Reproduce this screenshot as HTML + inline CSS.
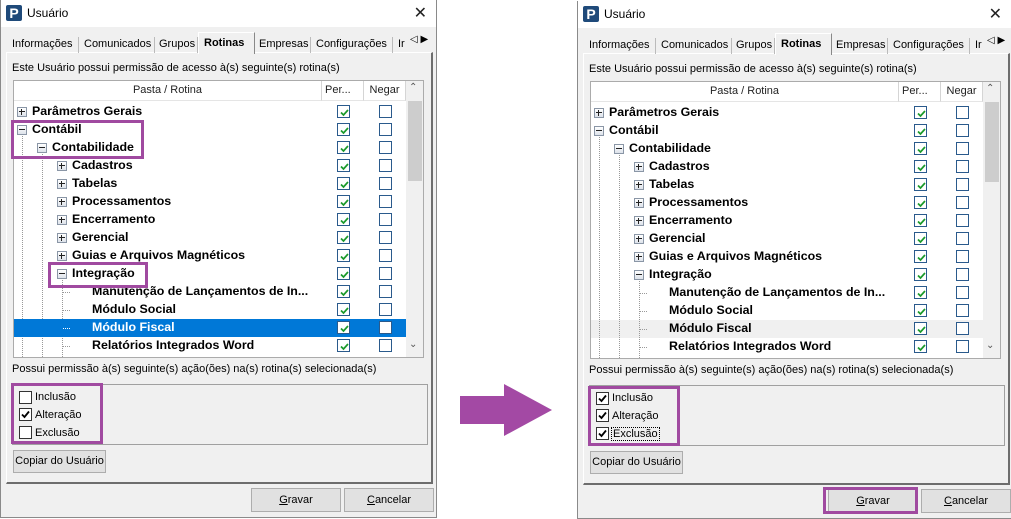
<!DOCTYPE html>
<html><head><meta charset="utf-8">
<style>
*{box-sizing:border-box;margin:0;padding:0}
body{width:1011px;height:519px;background:#fff;position:relative;overflow:hidden;font-family:"Liberation Sans","DejaVu Sans",sans-serif;font-size:11px;color:#000}
.win{position:absolute;top:0;width:437px;height:518px;background:#f0f0f0;border:1px solid #8a8a8a;border-top:none;overflow:hidden}
.title{position:absolute;left:0;top:0;right:0;height:27px;background:#fff}
.ico{position:absolute;left:5px;top:5px;width:16px;height:16px;background:#1f4a7a;border-radius:2px;color:#fff;font-weight:bold;font-size:14px;line-height:16px;text-align:center}
.ttl{position:absolute;left:26px;top:6px;font-size:12px}
.x{position:absolute;right:9px;top:3px;font-size:16px;color:#222;font-weight:normal}
.a{position:absolute;white-space:nowrap}
.tab{position:absolute;top:37px;height:16px;padding:1px 0 0 0;border-right:1px solid #bbb;white-space:nowrap;font-size:11px}
.panel{position:absolute;left:5px;top:52px;width:427px;height:432px;border:1px solid #fff;border-right:2px solid #6d6d6d;border-bottom:2px solid #6d6d6d}
.grid{position:absolute;left:12px;top:80px;width:411px;height:278px;background:#fff;border:1px solid #ababab;overflow:hidden}
.hdr{position:absolute;top:0;height:20px;border-right:1px solid #d5d5d5;border-bottom:1px solid #e5e5e5;text-align:center;line-height:19px;font-size:11px;color:#222;white-space:nowrap}
.row{position:absolute;left:0;width:392px;height:18px}
.row b{position:absolute;top:1px;font-size:12.4px;white-space:nowrap}
.exp{position:absolute;top:4px;width:10px;height:10px;border:1px solid #8a96a6;background:linear-gradient(#fff,#dde2ea)}
.exp:before{content:"";position:absolute;left:1px;top:3px;width:6px;height:1px;background:#222}
.exp.p:after{content:"";position:absolute;left:3px;top:1px;width:1px;height:6px;background:#222}
.cb{position:absolute;top:2px;width:13px;height:13px;border:1px solid #2a5a8c;background:#fff}
.cb svg{position:absolute;left:1px;top:1px}
.vl{position:absolute;width:0;border-left:1px dotted #999}
.hl{position:absolute;height:0;width:7px;border-top:1px dotted #999}
.btn{position:absolute;height:24px;background:#e1e1e1;border:1px solid #adadad;text-align:center;line-height:22px;white-space:nowrap;font-size:11px}
.ck{position:absolute;width:13px;height:13px;border:1px solid #333;background:#fff}
.pur{position:absolute;border:3px solid #a04aa0}
</style></head><body>

<!-- LEFT WINDOW -->
<div class="win" style="left:0">
 <div class="title"><div class="ico">P</div><div class="ttl">Usuário</div><div class="x">✕</div></div>
 <div class="panel"></div>
 <div class="tab" style="left:9px;width:69px;padding-left:2px">Informações</div>
 <div class="tab" style="left:80px;width:74px;padding-left:3px">Comunicados</div>
 <div class="tab" style="left:155px;width:42px;padding-left:3px">Grupos</div>
 <div class="a" style="left:197px;top:32px;width:57px;height:22px;background:#f0f0f0;border:1px solid #fff;border-bottom:none;border-right:1px solid #888;padding:4px 0 0 5px;font-weight:bold;font-size:11px">Rotinas</div>
 <div class="tab" style="left:256px;width:54px;padding-left:2px">Empresas</div>
 <div class="tab" style="left:311px;width:81px;padding-left:4px">Configurações</div>
 <div class="a" style="left:397px;top:38px">Ir</div>
 <div class="a" style="left:409px;top:34px;font-size:10px">◁ ▶</div>
 <div class="a" style="left:11px;top:62px">Este Usuário possui permissão de acesso à(s) seguinte(s) rotina(s)</div>
 <div class="grid">
  <div class="hdr" style="left:0;width:308px">Pasta / Rotina</div>
  <div class="hdr" style="left:308px;width:42px;text-align:left;padding-left:3px">Per...</div>
  <div class="hdr" style="left:350px;width:42px">Negar</div>
  <div class="a" style="left:392px;top:0;width:18px;height:277px;background:#f0f0f0"></div>
  <div class="a" style="left:394px;top:20px;width:14px;height:80px;background:#cdcdcd"></div>
  <div class="a" style="left:395px;top:1px;font-size:10px;color:#555">⌃</div>
  <div class="a" style="left:395px;top:258px;font-size:10px;color:#555">⌄</div>
  <div class="vl" style="left:8px;top:50px;height:228px"></div>
  <div class="vl" style="left:28px;top:68px;height:210px"></div>
  <div class="vl" style="left:48px;top:194px;height:84px"></div>
  <div class="row" style="top:238px;background:#0078d7"></div>
  <div class="row" style="top:22px"><div class="exp p" style="left:3px"></div><b style="left:18px">Parâmetros Gerais</b><div class="cb" style="left:323px"><svg width="11" height="11"><path d="M2 5.5l2.5 2.5 4.5-5" stroke="#1a9a2a" stroke-width="1.7" fill="none"/></svg></div><div class="cb" style="left:365px"></div></div>
  <div class="row" style="top:40px"><div class="exp" style="left:3px"></div><b style="left:18px">Contábil</b><div class="cb" style="left:323px"><svg width="11" height="11"><path d="M2 5.5l2.5 2.5 4.5-5" stroke="#1a9a2a" stroke-width="1.7" fill="none"/></svg></div><div class="cb" style="left:365px"></div></div>
  <div class="row" style="top:58px"><div class="exp" style="left:23px"></div><b style="left:38px">Contabilidade</b><div class="cb" style="left:323px"><svg width="11" height="11"><path d="M2 5.5l2.5 2.5 4.5-5" stroke="#1a9a2a" stroke-width="1.7" fill="none"/></svg></div><div class="cb" style="left:365px"></div></div>
  <div class="row" style="top:76px"><div class="exp p" style="left:43px"></div><b style="left:58px">Cadastros</b><div class="cb" style="left:323px"><svg width="11" height="11"><path d="M2 5.5l2.5 2.5 4.5-5" stroke="#1a9a2a" stroke-width="1.7" fill="none"/></svg></div><div class="cb" style="left:365px"></div></div>
  <div class="row" style="top:94px"><div class="exp p" style="left:43px"></div><b style="left:58px">Tabelas</b><div class="cb" style="left:323px"><svg width="11" height="11"><path d="M2 5.5l2.5 2.5 4.5-5" stroke="#1a9a2a" stroke-width="1.7" fill="none"/></svg></div><div class="cb" style="left:365px"></div></div>
  <div class="row" style="top:112px"><div class="exp p" style="left:43px"></div><b style="left:58px">Processamentos</b><div class="cb" style="left:323px"><svg width="11" height="11"><path d="M2 5.5l2.5 2.5 4.5-5" stroke="#1a9a2a" stroke-width="1.7" fill="none"/></svg></div><div class="cb" style="left:365px"></div></div>
  <div class="row" style="top:130px"><div class="exp p" style="left:43px"></div><b style="left:58px">Encerramento</b><div class="cb" style="left:323px"><svg width="11" height="11"><path d="M2 5.5l2.5 2.5 4.5-5" stroke="#1a9a2a" stroke-width="1.7" fill="none"/></svg></div><div class="cb" style="left:365px"></div></div>
  <div class="row" style="top:148px"><div class="exp p" style="left:43px"></div><b style="left:58px">Gerencial</b><div class="cb" style="left:323px"><svg width="11" height="11"><path d="M2 5.5l2.5 2.5 4.5-5" stroke="#1a9a2a" stroke-width="1.7" fill="none"/></svg></div><div class="cb" style="left:365px"></div></div>
  <div class="row" style="top:166px"><div class="exp p" style="left:43px"></div><b style="left:58px">Guias e Arquivos Magnéticos</b><div class="cb" style="left:323px"><svg width="11" height="11"><path d="M2 5.5l2.5 2.5 4.5-5" stroke="#1a9a2a" stroke-width="1.7" fill="none"/></svg></div><div class="cb" style="left:365px"></div></div>
  <div class="row" style="top:184px"><div class="exp" style="left:43px"></div><b style="left:58px">Integração</b><div class="cb" style="left:323px"><svg width="11" height="11"><path d="M2 5.5l2.5 2.5 4.5-5" stroke="#1a9a2a" stroke-width="1.7" fill="none"/></svg></div><div class="cb" style="left:365px"></div></div>
  <div class="row" style="top:202px"><div class="hl" style="left:49px;top:9px"></div><b style="left:78px">Manutenção de Lançamentos de In...</b><div class="cb" style="left:323px"><svg width="11" height="11"><path d="M2 5.5l2.5 2.5 4.5-5" stroke="#1a9a2a" stroke-width="1.7" fill="none"/></svg></div><div class="cb" style="left:365px"></div></div>
  <div class="row" style="top:220px"><div class="hl" style="left:49px;top:9px"></div><b style="left:78px">Módulo Social</b><div class="cb" style="left:323px"><svg width="11" height="11"><path d="M2 5.5l2.5 2.5 4.5-5" stroke="#1a9a2a" stroke-width="1.7" fill="none"/></svg></div><div class="cb" style="left:365px"></div></div>
  <div class="row" style="top:238px"><div class="hl" style="left:49px;top:9px;border-color:#fff"></div><b style="left:78px;color:#fff">Módulo Fiscal</b><div class="cb" style="left:323px"><svg width="11" height="11"><path d="M2 5.5l2.5 2.5 4.5-5" stroke="#1a9a2a" stroke-width="1.7" fill="none"/></svg></div><div class="cb" style="left:365px"></div></div>
  <div class="row" style="top:256px"><div class="hl" style="left:49px;top:9px"></div><b style="left:78px">Relatórios Integrados Word</b><div class="cb" style="left:323px"><svg width="11" height="11"><path d="M2 5.5l2.5 2.5 4.5-5" stroke="#1a9a2a" stroke-width="1.7" fill="none"/></svg></div><div class="cb" style="left:365px"></div></div>
 </div>
 <div class="a" style="left:11px;top:363px">Possui permissão à(s) seguinte(s) ação(ões) na(s) rotina(s) selecionada(s)</div>
 <div class="a" style="left:11px;top:384px;width:416px;height:61px;border:1px solid #a0a0a0"></div>
 <div class="ck" style="left:18px;top:391px"></div><div class="a" style="left:34px;top:391px">Inclusão</div>
 <div class="ck" style="left:18px;top:408px"><svg width="11" height="11"><path d="M2 5.5l2.5 2.5 4.5-5.5" stroke="#000" stroke-width="1.8" fill="none"/></svg></div><div class="a" style="left:34px;top:409px">Alteração</div>
 <div class="ck" style="left:18px;top:426px"></div><div class="a" style="left:34px;top:427px">Exclusão</div>
 <div class="btn" style="left:12px;top:450px;width:93px;height:23px;line-height:21px">Copiar do Usuário</div>
 <div class="btn" style="left:250px;top:488px;width:90px"><u>G</u>ravar</div>
 <div class="btn" style="left:343px;top:488px;width:90px"><u>C</u>ancelar</div>
</div>
<div class="pur" style="left:11px;top:120px;width:133px;height:39px"></div>
<div class="pur" style="left:48px;top:262px;width:100px;height:26px"></div>
<div class="pur" style="left:11px;top:383px;width:92px;height:61px"></div>

<!-- ARROW -->
<svg style="position:absolute;left:455px;top:380px" width="105" height="60"><path d="M5 16H49V4L97 30L49 56V44H5Z" fill="#a349a4"/></svg>

<!-- RIGHT WINDOW -->
<div class="win" style="left:577px;top:1px;width:434px;border-right:none">
 <div class="title"><div class="ico">P</div><div class="ttl">Usuário</div><div class="x">✕</div></div>
 <div class="panel"></div>
 <div class="tab" style="left:9px;width:69px;padding-left:2px">Informações</div>
 <div class="tab" style="left:80px;width:74px;padding-left:3px">Comunicados</div>
 <div class="tab" style="left:155px;width:42px;padding-left:3px">Grupos</div>
 <div class="a" style="left:197px;top:32px;width:57px;height:22px;background:#f0f0f0;border:1px solid #fff;border-bottom:none;border-right:1px solid #888;padding:4px 0 0 5px;font-weight:bold;font-size:11px">Rotinas</div>
 <div class="tab" style="left:256px;width:54px;padding-left:2px">Empresas</div>
 <div class="tab" style="left:311px;width:81px;padding-left:4px">Configurações</div>
 <div class="a" style="left:397px;top:38px">Ir</div>
 <div class="a" style="left:409px;top:34px;font-size:10px">◁ ▶</div>
 <div class="a" style="left:11px;top:62px">Este Usuário possui permissão de acesso à(s) seguinte(s) rotina(s)</div>
 <div class="grid">
  <div class="hdr" style="left:0;width:308px">Pasta / Rotina</div>
  <div class="hdr" style="left:308px;width:42px;text-align:left;padding-left:3px">Per...</div>
  <div class="hdr" style="left:350px;width:42px">Negar</div>
  <div class="a" style="left:392px;top:0;width:18px;height:277px;background:#f0f0f0"></div>
  <div class="a" style="left:394px;top:20px;width:14px;height:80px;background:#cdcdcd"></div>
  <div class="a" style="left:395px;top:1px;font-size:10px;color:#555">⌃</div>
  <div class="a" style="left:395px;top:258px;font-size:10px;color:#555">⌄</div>
  <div class="row" style="top:238px;background:#f0f0f0"></div>
  <div class="vl" style="left:8px;top:50px;height:228px"></div>
  <div class="vl" style="left:28px;top:68px;height:210px"></div>
  <div class="vl" style="left:48px;top:194px;height:84px"></div>
  <div class="row" style="top:22px"><div class="exp p" style="left:3px"></div><b style="left:18px">Parâmetros Gerais</b><div class="cb" style="left:323px"><svg width="11" height="11"><path d="M2 5.5l2.5 2.5 4.5-5" stroke="#1a9a2a" stroke-width="1.7" fill="none"/></svg></div><div class="cb" style="left:365px"></div></div>
  <div class="row" style="top:40px"><div class="exp" style="left:3px"></div><b style="left:18px">Contábil</b><div class="cb" style="left:323px"><svg width="11" height="11"><path d="M2 5.5l2.5 2.5 4.5-5" stroke="#1a9a2a" stroke-width="1.7" fill="none"/></svg></div><div class="cb" style="left:365px"></div></div>
  <div class="row" style="top:58px"><div class="exp" style="left:23px"></div><b style="left:38px">Contabilidade</b><div class="cb" style="left:323px"><svg width="11" height="11"><path d="M2 5.5l2.5 2.5 4.5-5" stroke="#1a9a2a" stroke-width="1.7" fill="none"/></svg></div><div class="cb" style="left:365px"></div></div>
  <div class="row" style="top:76px"><div class="exp p" style="left:43px"></div><b style="left:58px">Cadastros</b><div class="cb" style="left:323px"><svg width="11" height="11"><path d="M2 5.5l2.5 2.5 4.5-5" stroke="#1a9a2a" stroke-width="1.7" fill="none"/></svg></div><div class="cb" style="left:365px"></div></div>
  <div class="row" style="top:94px"><div class="exp p" style="left:43px"></div><b style="left:58px">Tabelas</b><div class="cb" style="left:323px"><svg width="11" height="11"><path d="M2 5.5l2.5 2.5 4.5-5" stroke="#1a9a2a" stroke-width="1.7" fill="none"/></svg></div><div class="cb" style="left:365px"></div></div>
  <div class="row" style="top:112px"><div class="exp p" style="left:43px"></div><b style="left:58px">Processamentos</b><div class="cb" style="left:323px"><svg width="11" height="11"><path d="M2 5.5l2.5 2.5 4.5-5" stroke="#1a9a2a" stroke-width="1.7" fill="none"/></svg></div><div class="cb" style="left:365px"></div></div>
  <div class="row" style="top:130px"><div class="exp p" style="left:43px"></div><b style="left:58px">Encerramento</b><div class="cb" style="left:323px"><svg width="11" height="11"><path d="M2 5.5l2.5 2.5 4.5-5" stroke="#1a9a2a" stroke-width="1.7" fill="none"/></svg></div><div class="cb" style="left:365px"></div></div>
  <div class="row" style="top:148px"><div class="exp p" style="left:43px"></div><b style="left:58px">Gerencial</b><div class="cb" style="left:323px"><svg width="11" height="11"><path d="M2 5.5l2.5 2.5 4.5-5" stroke="#1a9a2a" stroke-width="1.7" fill="none"/></svg></div><div class="cb" style="left:365px"></div></div>
  <div class="row" style="top:166px"><div class="exp p" style="left:43px"></div><b style="left:58px">Guias e Arquivos Magnéticos</b><div class="cb" style="left:323px"><svg width="11" height="11"><path d="M2 5.5l2.5 2.5 4.5-5" stroke="#1a9a2a" stroke-width="1.7" fill="none"/></svg></div><div class="cb" style="left:365px"></div></div>
  <div class="row" style="top:184px"><div class="exp" style="left:43px"></div><b style="left:58px">Integração</b><div class="cb" style="left:323px"><svg width="11" height="11"><path d="M2 5.5l2.5 2.5 4.5-5" stroke="#1a9a2a" stroke-width="1.7" fill="none"/></svg></div><div class="cb" style="left:365px"></div></div>
  <div class="row" style="top:202px"><div class="hl" style="left:49px;top:9px"></div><b style="left:78px">Manutenção de Lançamentos de In...</b><div class="cb" style="left:323px"><svg width="11" height="11"><path d="M2 5.5l2.5 2.5 4.5-5" stroke="#1a9a2a" stroke-width="1.7" fill="none"/></svg></div><div class="cb" style="left:365px"></div></div>
  <div class="row" style="top:220px"><div class="hl" style="left:49px;top:9px"></div><b style="left:78px">Módulo Social</b><div class="cb" style="left:323px"><svg width="11" height="11"><path d="M2 5.5l2.5 2.5 4.5-5" stroke="#1a9a2a" stroke-width="1.7" fill="none"/></svg></div><div class="cb" style="left:365px"></div></div>
  <div class="row" style="top:238px"><div class="hl" style="left:49px;top:9px"></div><b style="left:78px">Módulo Fiscal</b><div class="cb" style="left:323px"><svg width="11" height="11"><path d="M2 5.5l2.5 2.5 4.5-5" stroke="#1a9a2a" stroke-width="1.7" fill="none"/></svg></div><div class="cb" style="left:365px"></div></div>
  <div class="row" style="top:256px"><div class="hl" style="left:49px;top:9px"></div><b style="left:78px">Relatórios Integrados Word</b><div class="cb" style="left:323px"><svg width="11" height="11"><path d="M2 5.5l2.5 2.5 4.5-5" stroke="#1a9a2a" stroke-width="1.7" fill="none"/></svg></div><div class="cb" style="left:365px"></div></div>
 </div>
 <div class="a" style="left:11px;top:363px">Possui permissão à(s) seguinte(s) ação(ões) na(s) rotina(s) selecionada(s)</div>
 <div class="a" style="left:11px;top:384px;width:416px;height:61px;border:1px solid #a0a0a0"></div>
 <div class="ck" style="left:18px;top:391px"><svg width="11" height="11"><path d="M2 5.5l2.5 2.5 4.5-5.5" stroke="#000" stroke-width="1.8" fill="none"/></svg></div><div class="a" style="left:34px;top:391px">Inclusão</div>
 <div class="ck" style="left:18px;top:408px"><svg width="11" height="11"><path d="M2 5.5l2.5 2.5 4.5-5.5" stroke="#000" stroke-width="1.8" fill="none"/></svg></div><div class="a" style="left:34px;top:409px">Alteração</div>
 <div class="ck" style="left:18px;top:426px"><svg width="11" height="11"><path d="M2 5.5l2.5 2.5 4.5-5.5" stroke="#000" stroke-width="1.8" fill="none"/></svg></div><div class="a" style="left:33px;top:426px;border:1px dotted #000;padding:0 1px">Exclusão</div>
 <div class="btn" style="left:12px;top:450px;width:93px;height:23px;line-height:21px">Copiar do Usuário</div>
 <div class="btn" style="left:250px;top:488px;width:90px"><u>G</u>ravar</div>
 <div class="btn" style="left:343px;top:488px;width:90px"><u>C</u>ancelar</div>
</div>
<div class="pur" style="left:588px;top:386px;width:92px;height:60px"></div>
<div class="pur" style="left:823px;top:487px;width:95px;height:27px"></div>
</body></html>
